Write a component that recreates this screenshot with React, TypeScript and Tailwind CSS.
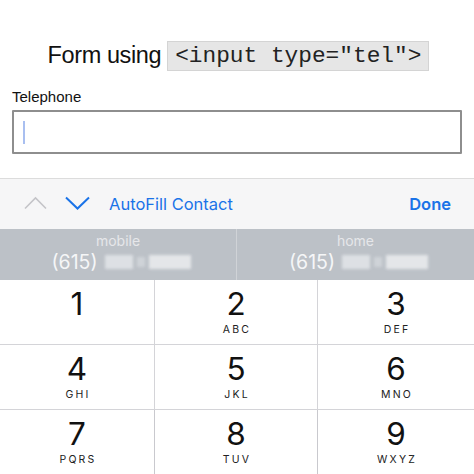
import React from 'react'

const keys = [
  { n: '1', l: '' },
  { n: '2', l: 'ABC' },
  { n: '3', l: 'DEF' },
  { n: '4', l: 'GHI' },
  { n: '5', l: 'JKL' },
  { n: '6', l: 'MNO' },
  { n: '7', l: 'PQRS' },
  { n: '8', l: 'TUV' },
  { n: '9', l: 'WXYZ' }
]

const Blur = () => (
  <div className="flex items-center gap-[4px] blur-[1.5px] w-[88px]">
    <div className="h-[14px] w-[28px] bg-[#dde0e4]" />
    <div className="h-[10px] w-[8px] bg-[#cfd3d8]" />
    <div className="h-[14px] w-[42px] bg-[#e4e6e9]" />
  </div>
)

const App = () => {
  return (
    <div className="w-[474px] h-[474px] overflow-hidden bg-white font-['Liberation_Sans',sans-serif]">
      <div className="h-[178px] flex flex-col">
        <div className="flex items-center justify-center mt-[41px] h-[30px] gap-[6px] pl-[3px]">
          <span className="text-[23.5px] text-[#111] tracking-[-0.4px]">Form using</span>
          <span className="h-[30px] px-[7px] flex items-center bg-[#e6e6e6] border border-[#d4d4d4] font-['Liberation_Mono',monospace] text-[22.8px] text-[#222]">
            {'<input type="tel">'}
          </span>
        </div>
        <div className="ml-[12px] mt-[17px] text-[15px] text-[#111] leading-[18px]">Telephone</div>
        <div className="mx-[12px] mt-[4px] h-[44px] border-2 border-[#8e8e8e] rounded-[1px] flex items-center pl-[9px]">
          <div className="w-[2px] h-[23px] bg-[#a9bff0]" />
        </div>
      </div>
      <div className="border-t border-[#dcdcdc] h-[51px] bg-[#f6f6f7] flex items-center px-[24px] font-['Inter',sans-serif]">
        <svg width="23" height="14" viewBox="0 0 23 14" fill="none" className="mt-[-2px]">
          <path d="M1 12.5 L11.5 2 L22 12.5" stroke="#c4c4c8" strokeWidth="1.6" />
        </svg>
        <svg width="25" height="14" viewBox="0 0 25 14" fill="none" className="ml-[18px] mt-[-2px]">
          <path d="M1 1.5 L12.5 12.5 L24 1.5" stroke="#1a73e8" strokeWidth="2" />
        </svg>
        <span className="ml-[19px] text-[16.5px] text-[#1a73e8]">AutoFill Contact</span>
        <span className="ml-auto mr-[-1px] text-[16.5px] font-semibold text-[#1a73e8]">Done</span>
      </div>
      <div className="h-[51px] bg-[#bcc1c7] grid grid-cols-2 font-['Inter',sans-serif]">
        <div className="flex flex-col items-center pt-[4px] border-r border-[#d0d3d7]">
          <span className="text-[14px] leading-[16px] text-[#e6e7ea]">mobile</span>
          <div className="flex items-center gap-[7px] ml-[8px]">
            <span className="text-[19.5px] leading-[26px] text-[#f5f6f7]">(615)</span>
            <Blur />
          </div>
        </div>
        <div className="flex flex-col items-center pt-[4px]">
          <span className="text-[14px] leading-[16px] text-[#e6e7ea]">home</span>
          <div className="flex items-center gap-[7px] ml-[8px]">
            <span className="text-[19.5px] leading-[26px] text-[#f5f6f7]">(615)</span>
            <Blur />
          </div>
        </div>
      </div>
      <div className="grid grid-cols-[155px_163px_156px] grid-rows-[65px_65px_64px] font-['Inter',sans-serif]">
        {keys.map((k, i) => (
          <div
            key={k.n}
            className={`flex flex-col items-center pt-[5px] ${i % 3 !== 2 ? 'border-r border-[#c9c9ce]' : ''} ${i < 6 ? 'border-b border-[#d4d4d8]' : ''}`}
          >
            <span className="text-[31.5px] leading-[38px] text-[#111]">{k.n}</span>
            <span className="text-[10.5px] leading-[13px] tracking-[2.2px] text-[#222] ml-[2px]">{k.l}</span>
          </div>
        ))}
      </div>
    </div>
  )
}

export default App
